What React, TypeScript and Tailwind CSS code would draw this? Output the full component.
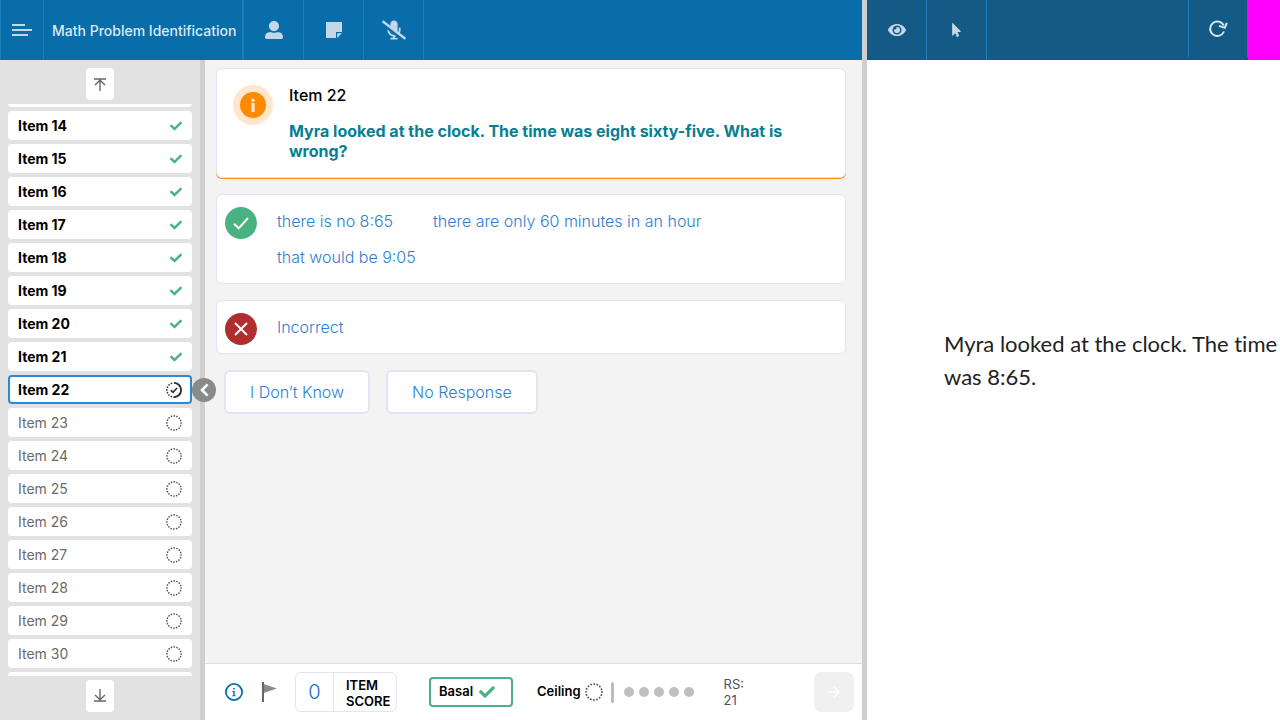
import type { ReactNode } from "react";
import { FaCheck, FaEye, FaMicrophoneSlash, FaMousePointer, FaUserAlt } from "react-icons/fa";

const items = Array.from({ length: 19 }, (_, i) => 13 + i);
const current = 22;

function DottedCircle({ size }: { size: number }) {
  return (
    <svg width={size} height={size} viewBox="0 0 18 18" fill="none" aria-hidden="true">
      <circle cx="9" cy="9" r="8" stroke="#555" strokeWidth="1.9" strokeLinecap="round" strokeDasharray="0.01 3.1316" />
    </svg>
  );
}

function ProgressCheck() {
  return (
    <svg width="16" height="16" viewBox="0 0 18 18" fill="none" stroke="#333" aria-hidden="true">
      <path d="M9 1A8 8 0 0 1 9 17" strokeWidth="2.1" />
      <path d="M9 17A8 8 0 0 1 9 1" strokeWidth="1.9" strokeLinecap="round" strokeDasharray="0.01 3.1316" />
      <path d="M5.4 9.2l2.5 2.4 4.5-4.9" strokeWidth="1.9" />
    </svg>
  );
}

function ItemRow({ n }: { n: number }) {
  const base = "flex h-[29px] w-full shrink-0 items-center justify-between rounded bg-white text-sm";
  if (n === current) {
    return (
      <button aria-current="true" className={base + " border-2 border-[#2b8ad6] px-2 font-bold text-black"}>
        Item {n}
        <ProgressCheck />
      </button>
    );
  }
  if (n < current) {
    return (
      <button className={base + " px-2.5 font-bold text-black"}>
        Item {n}
        <FaCheck className="size-3 text-[#48b283]" />
      </button>
    );
  }
  return (
    <button className={base + " px-2.5 text-[#6b6b6b]"}>
      Item {n}
      <DottedCircle size={16} />
    </button>
  );
}

function HeaderButton({ label, children }: { label: string; children: ReactNode }) {
  return (
    <button
      aria-label={label}
      className="flex h-full w-[60px] shrink-0 items-center justify-center border-r border-[#1f7db8] text-[#c5d6e6]"
    >
      {children}
    </button>
  );
}

function EdgeButton({ label, down }: { label: string; down?: boolean }) {
  return (
    <button aria-label={label} className="flex h-8 w-7 shrink-0 items-center justify-center self-center rounded bg-white">
      <svg
        width="14"
        height="14"
        viewBox="0 0 14 14"
        fill="none"
        stroke="#666"
        strokeWidth="1.4"
        className={down ? "rotate-180" : ""}
        aria-hidden="true"
      >
        <path d="M1 2h12M7 14V3.5M2 8l5-4.7L12 8" />
      </svg>
    </button>
  );
}

function Answer({ children }: { children: ReactNode }) {
  return <button className="h-9 text-left text-base font-[350] text-[#2d80d2]">{children}</button>;
}

export default function App() {
  return (
    <div className="flex h-screen overflow-hidden bg-white font-['Inter',sans-serif] text-black">
      <div className="flex min-w-0 grow flex-col">
        <header className="flex h-[60px] shrink-0 bg-[#096da9]">
          <button aria-label="Menu" className="flex w-11 shrink-0 items-center justify-center border-x border-[#1f7db8]">
            <svg width="20" height="12" viewBox="0 0 20 12" fill="#c5d6e6" aria-hidden="true">
              <path d="M0 0h13v2H0zM0 5h20v2H0zM0 10h16v2H0z" />
            </svg>
          </button>
          <h1 className="flex w-[200px] shrink-0 items-center border-r-2 border-[#1f7db8] px-2 pt-0.5 text-sm font-medium whitespace-nowrap text-[#dbe8f2]">
            Math Problem Identification
          </h1>
          <div className="flex">
            <HeaderButton label="Examinee">
              <FaUserAlt className="size-[18px]" />
            </HeaderButton>
            <HeaderButton label="Notes">
              <svg width="16" height="16" viewBox="0 0 16 16" fill="currentColor" aria-hidden="true">
                <path d="M0 0h16v10h-6v6H0z" />
                <path d="M11.2 11.2H16L11.2 16z" />
              </svg>
            </HeaderButton>
            <HeaderButton label="Microphone off">
              <FaMicrophoneSlash className="h-5 w-6" />
            </HeaderButton>
          </div>
        </header>

        <div className="flex min-h-0 grow">
          <aside className="relative flex w-[205px] shrink-0 flex-col gap-1 border-r-[5px] border-[#cfcfcf] bg-[#e2e2e2] px-2 py-2">
            <EdgeButton label="First item" />
            <nav className="flex min-h-0 grow flex-col overflow-hidden">
              <div className="-mt-[26px] flex flex-col gap-1">
                {items.map((n) => (
                  <ItemRow key={n} n={n} />
                ))}
              </div>
            </nav>
            <EdgeButton label="Last item" down />
            <button
              aria-label="Collapse item list"
              className="absolute top-1/2 left-48 flex size-6 -translate-y-1/2 items-center justify-center rounded-full bg-[#888b8a]"
            >
              <svg width="9" height="14" viewBox="0 0 9 14" fill="none" stroke="#fff" strokeWidth="2.6" aria-hidden="true">
                <path d="M7.6 1.4L2 7l5.6 5.6" />
              </svg>
            </button>
          </aside>

          <div className="flex min-w-0 grow flex-col bg-[#f3f3f3]">
            <main className="flex min-h-0 grow flex-col gap-4 overflow-hidden pt-2 pr-4 pl-[11px]">
              <section className="flex min-h-[110px] gap-4 rounded-md border border-[#e2e5f1] bg-white px-4 py-4 shadow-[0_1px_0_#fb8f0b]">
                <span className="flex size-10 shrink-0 items-center justify-center rounded-full bg-[#ffe6cc]">
                  <svg width="26" height="26" viewBox="0 0 26 26" aria-hidden="true">
                    <circle cx="13" cy="13" r="13" fill="#ff8a00" />
                    <circle cx="13" cy="8.3" r="1.7" fill="#ffe6cc" />
                    <path d="M11.4 11h3.2v9h-3.2z" fill="#ffe6cc" />
                  </svg>
                </span>
                <div className="flex flex-col gap-4">
                  <h2 className="text-base leading-5 font-medium">Item 22</h2>
                  <p className="text-base leading-5 font-[750] text-[#077f92]">
                    Myra looked at the clock. The time was eight sixty-five. What is wrong?
                  </p>
                </div>
              </section>

              <section className="flex gap-5 rounded-md border border-[#e2e5f1] bg-white px-2 pt-2 pb-2">
                <span className="mt-1 flex size-8 shrink-0 items-center justify-center rounded-full bg-[#48b283]">
                  <svg width="16" height="14" viewBox="0 0 16 14" fill="none" stroke="#fff" strokeWidth="2" aria-hidden="true">
                    <path d="M1 7.8l4.7 4.5L15 2" />
                  </svg>
                </span>
                <div className="flex flex-wrap gap-x-10">
                  <Answer>there is no 8:65</Answer>
                  <Answer>there are only 60 minutes in an hour</Answer>
                  <Answer>that would be 9:05</Answer>
                </div>
              </section>

              <section className="flex gap-5 rounded-md border border-[#e2e5f1] bg-white px-2 pt-2 pb-2">
                <span className="mt-1 flex size-8 shrink-0 items-center justify-center rounded-full bg-[#b02e2e]">
                  <svg width="14" height="14" viewBox="0 0 14 14" fill="none" stroke="#fff" strokeWidth="1.9" aria-hidden="true">
                    <path d="M1 1l12 12M13 1L1 13" />
                  </svg>
                </span>
                <Answer>Incorrect</Answer>
              </section>

              <div className="flex gap-4 px-2">
                <button className="h-11 rounded-md border-2 border-[#e2e5f1] bg-white px-6 text-base font-[350] text-[#2d80d2]">
                  I Don’t Know
                </button>
                <button className="h-11 rounded-md border-2 border-[#e2e5f1] bg-white px-6 text-base font-[350] text-[#2d80d2]">
                  No Response
                </button>
              </div>
            </main>

            <footer className="flex h-[57px] shrink-0 items-center border-t border-[#dedede] bg-white pr-2 pl-5">
              <button aria-label="Information" className="shrink-0">
                <svg width="18" height="18" viewBox="0 0 18 18" aria-hidden="true">
                  <circle cx="9" cy="9" r="8.1" fill="none" stroke="#096da9" strokeWidth="1.8" />
                  <path d="M8.2 5h1.6v1.6H8.2zM7.4 8h2.3v4.2h.9v1H7.4v-1h.9V9h-.9z" fill="#096da9" />
                </svg>
              </button>
              <button aria-label="Flag item" className="ml-[19px] shrink-0">
                <svg width="15" height="20" viewBox="0 0 15 20" aria-hidden="true">
                  <path d="M1.5 2L15 6.5 1.5 11z" fill="#8b8b8b" />
                  <path d="M0 0h2v20H0z" fill="#666" />
                </svg>
              </button>
              <div className="ml-[18px] flex h-10 w-[102px] shrink-0 rounded-md border border-[#e2e5f1]">
                <span className="flex w-[38px] shrink-0 items-center justify-center border-r border-[#e2e5f1] text-xl font-light text-[#1a6fb5]">
                  0
                </span>
                <span className="pt-1 pl-3 text-[13px] leading-4 font-semibold">
                  ITEM
                  <br />
                  SCORE
                </span>
              </div>
              <button className="ml-8 flex h-[30px] w-[84px] shrink-0 items-center gap-1.5 rounded-sm border-2 border-[#48b283] px-2 text-[13px] font-semibold">
                Basal
                <FaCheck className="size-4 text-[#48b283]" />
              </button>
              <div className="ml-6 flex items-center gap-1 text-[13px] font-semibold">
                Ceiling
                <DottedCircle size={18} />
              </div>
              <span className="ml-2 h-[21px] w-[3px] rounded-full bg-[#bdbdbd]" />
              <div className="ml-2.5 flex gap-[5px]">
                {[1, 2, 3, 4, 5].map((n) => (
                  <span key={n} className="size-2.5 rounded-full bg-[#bfbfbf]" />
                ))}
              </div>
              <p className="ml-[30px] text-[13px] leading-4 text-[#4a5160]">
                RS:
                <br />
                21
              </p>
              <button
                aria-label="Next item"
                disabled
                className="ml-auto flex size-10 shrink-0 items-center justify-center rounded-lg bg-[#f0f0f0]"
              >
                <svg width="12" height="12" viewBox="0 0 12 12" fill="none" stroke="#fff" strokeWidth="1.5" aria-hidden="true">
                  <path d="M0 6h11M6 1l5 5-5 5" />
                </svg>
              </button>
            </footer>
          </div>
        </div>
      </div>

      <aside className="flex w-[418px] shrink-0 flex-col border-l-[5px] border-[#cfcfcf] bg-white">
        <header className="flex h-[60px] shrink-0 bg-[#135b86]">
          <HeaderButton label="Show stimulus">
            <FaEye className="size-[18px]" />
          </HeaderButton>
          <HeaderButton label="Pointer">
            <FaMousePointer className="h-3.5 w-[9px]" />
          </HeaderButton>
          <button
            aria-label="Refresh"
            className="ml-auto flex h-[57px] w-[60px] items-center justify-center border-x border-[#1f7db8]"
          >
            <svg width="20" height="18" viewBox="0 0 20 18" fill="none" stroke="#dce8f0" strokeWidth="1.9" aria-hidden="true">
              <path d="M15.8 5.5A7.2 7.2 0 1 0 16 11.5" />
              <path d="M18.8 2.8l-2 5-5.8-2" />
            </svg>
          </button>
          <div className="w-8 bg-[#ff00ff]" />
        </header>
        <div className="flex grow items-center">
          <p className="pb-[61px] pl-[77px] font-['Lato',sans-serif] text-[22px] leading-[33px] whitespace-nowrap text-[#222] [font-variant-ligatures:none]">
            Myra looked at the clock. The time
            <br />
            was 8:65.
          </p>
        </div>
      </aside>
    </div>
  );
}
